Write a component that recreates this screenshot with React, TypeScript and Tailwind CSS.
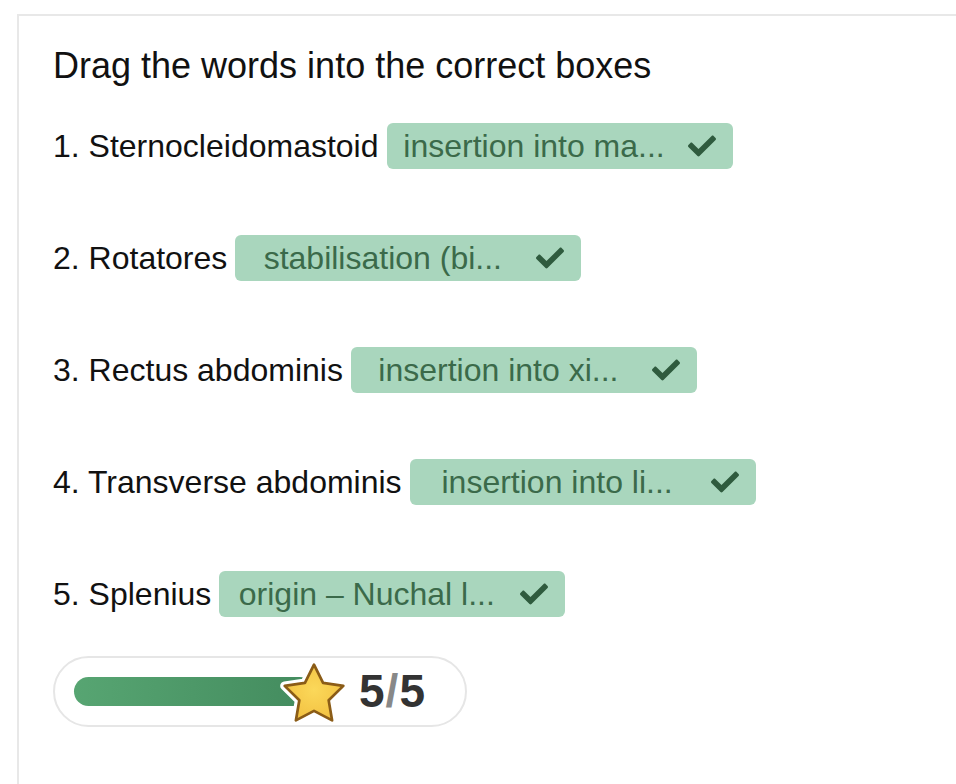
import { FaCheck } from 'react-icons/fa'

const ITEMS = [
  { label: '1. Sternocleidomastoid', answer: 'insertion into ma...' },
  { label: '2. Rotatores', answer: 'stabilisation (bi...' },
  { label: '3. Rectus abdominis', answer: 'insertion into xi...' },
  { label: '4. Transverse abdominis', answer: 'insertion into li...' },
  { label: '5. Splenius', answer: 'origin – Nuchal l...' },
]

const STAR_PATH =
  'M12 2.2l3.02 6.12 6.76.98-4.89 4.77 1.15 6.73L12 17.62l-6.04 3.18 1.15-6.73-4.89-4.77 6.76-.98z'

function Star() {
  return (
    <svg viewBox="0 0 24 24" className="h-[72px] w-[72px] shrink-0 -ml-[36px] mt-[4px]">
      <defs>
        <radialGradient id="starFill" cx="50%" cy="45%" r="60%">
          <stop offset="0%" stopColor="#fbd85a" />
          <stop offset="100%" stopColor="#f2c040" />
        </radialGradient>
      </defs>
      <path d={STAR_PATH} fill="#fff" stroke="#fff" strokeWidth="3" strokeLinejoin="round" />
      <path
        d={STAR_PATH}
        fill="url(#starFill)"
        stroke="#8b5c17"
        strokeWidth="0.9"
        strokeLinejoin="round"
      />
    </svg>
  )
}

export default function App() {
  return (
    <div
      className="min-h-[784px] bg-white pl-[17px] pt-[14px]"
      style={{ fontFamily: '"Liberation Sans", Arial, sans-serif' }}
    >
      <div className="min-h-[770px] border-l-2 border-t-2 border-[#e8e8e8] bg-white pl-[34px] pt-[29px]">
        <h1 className="text-[36px] leading-[41px] text-[#111]">Drag the words into the correct boxes</h1>

        <div className="mt-[37px] flex flex-col gap-[66px]">
          {ITEMS.map((item, i) => (
            <div key={i} className="flex items-center gap-[8px]">
              <span className="text-[32px] leading-[37px] text-[#111]">{item.label}</span>
              <div className="flex h-[46px] w-[346px] items-center rounded-[6px] bg-[#a9d6bd] pl-4 pr-[17px] text-[#3b6a4a]">
                <span className="flex-1 text-center text-[32px] leading-[37px] whitespace-nowrap">
                  {item.answer}
                </span>
                <FaCheck className="ml-[22px] h-[28px] w-[28px] text-[#2f5b3e]" />
              </div>
            </div>
          ))}
        </div>

        {/* score */}
        <div className="mt-[39px] flex h-[71px] w-[414px] items-center rounded-full border-2 border-[#e6e6e6] pl-[19px]">
          <div className="h-[29px] w-[240px] rounded-full bg-gradient-to-r from-[#57a572] to-[#438b5e]" />
          <Star />
          <span className="ml-[9px] text-[46px] font-bold tracking-[1px] text-[#333]">
            5<span className="text-[#888]">/</span>5
          </span>
        </div>
      </div>
    </div>
  )
}
